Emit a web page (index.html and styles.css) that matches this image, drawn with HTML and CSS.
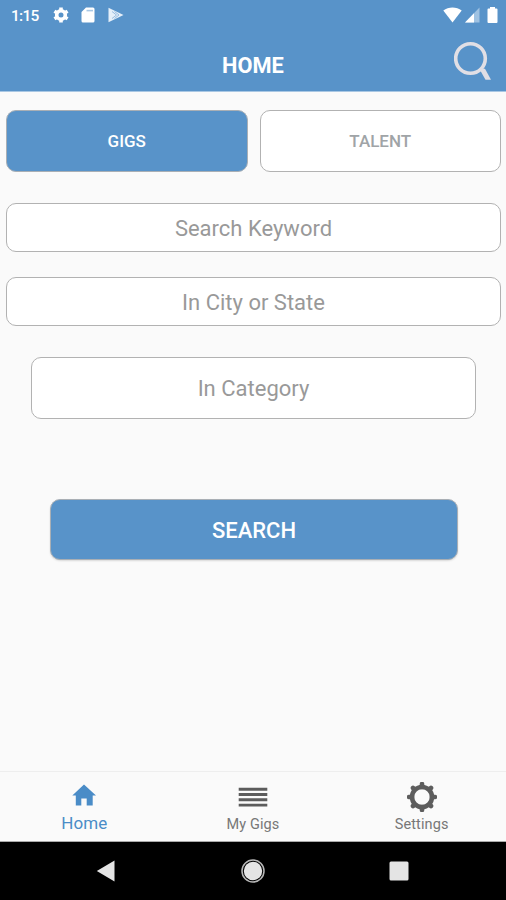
FILE: index.html
```html
<!DOCTYPE html>
<html lang="en">
<head>
<meta charset="utf-8">
<meta name="viewport" content="width=device-width, initial-scale=1">
<title>Home</title>
<link rel="stylesheet" href="styles.css">
</head>
<body>
<div class="screen">
  <header class="header">
    <div class="status">
      <span class="time">1:15</span>
      <svg class="st-gear" width="16" height="16" viewBox="0 0 16 16"><circle cx="8" cy="8" r="4.3" fill="none" stroke="#fff" stroke-width="3.6"/><path d="M8 .4V3M8 13v2.6M1.4 4.2l2.3 1.3M12.3 10.5l2.3 1.3M1.4 11.8l2.3-1.3M12.3 5.5l2.3-1.3" stroke="#fff" stroke-width="3.6"/></svg>
      <svg class="st-card" width="14" height="16" viewBox="0 0 14 16"><path d="M5 .5h7a1.5 1.5 0 0 1 1.5 1.5v12a1.5 1.5 0 0 1-1.500 1.500H2A1.500 1.500 0 0 1 .5 14V5z" fill="#fff"/><path d="M5.500 3.600h6.500" stroke="#a9c8e5" stroke-width="1.600"/></svg>
      <svg class="st-play" width="16" height="16" viewBox="0 0 16 16"><path d="M.5.8 15.500 8 .5 15.200z" fill="#e5eff9"/><path d="m4 4.500 4.500 3.500L4 11.500M6.500 4.500l4.500 3.500-4.500 3.500" fill="none" stroke="#8fb6dc" stroke-width=".9"/></svg>
      <span class="grow"></span>
      <svg width="19" height="16" viewBox="0 0 19 16"><path d="M.3 3.600C5.500-.4 13.500-.4 18.700 3.600L9.500 15.500z" fill="#fff"/></svg>
      <svg class="st-signal" width="15" height="16" viewBox="0 0 15 16"><path d="M14.500.5v15H0z" fill="#9fc2e2"/><path d="M9 6.200v9.300H0z" fill="#fff"/></svg>
      <svg class="st-battery" width="11" height="16" viewBox="0 0 11 16"><path d="M3 0h5v1.500h1.500a1 1 0 0 1 1 1V15a1 1 0 0 1-1 1h-8a1 1 0 0 1-1-1V2.500a1 1 0 0 1 1-1H3z" fill="#fff"/></svg>
    </div>
    <div class="titlebar">
      <span></span>
      <h1>HOME</h1>
      <svg class="search-icon" width="38" height="40" viewBox="0 0 38 40"><circle cx="16.500" cy="18.500" r="14.800" fill="none" stroke="#e1dfe5" stroke-width="3.600"/><path d="M25.300 28.800H31L37 39.800h-5.500z" fill="#e1dfe5"/></svg>
    </div>
  </header>
  <main class="content">
    <div class="toggle">
      <button class="btn primary small">GIGS</button>
      <button class="btn outline small">TALENT</button>
    </div>
    <div class="field keyword"><span>Search Keyword</span></div>
    <div class="field city"><span>In City or State</span></div>
    <div class="field category"><span>In Category</span></div>
    <button class="btn primary submit">SEARCH</button>
  </main>
  <nav class="tabs">
    <a class="tab active">
      <svg width="26" height="30" viewBox="0 0 26 30"><path d="M13 2.500 25 13.500H21.700V23.500H15.700V16.500h-5.400v7H4.800V13.500H1.300z" fill="#4a8cc7"/></svg>
      <span>Home</span>
    </a>
    <a class="tab">
      <svg width="30" height="30" viewBox="0 0 30 30"><path d="M.7 7.200h28.600M.7 12.500h28.600M.7 17.800h28.600M.7 23.100h28.600" stroke="#5c5c5c" stroke-width="2.900"/></svg>
      <span>My Gigs</span>
    </a>
    <a class="tab">
      <svg width="30" height="30" viewBox="0 0 30 30"><circle cx="15" cy="15" r="10" fill="none" stroke="#5d5d5d" stroke-width="4.600"/><path d="M15 2v3M15 25v3M2 15h3M25 15h3M6 6l1.500 1.500M22.500 22.500 24 24M6 24l1.500-1.500M22.500 7.500 24 6" stroke="#5d5d5d" stroke-width="4.600" stroke-linecap="round"/></svg>
      <span>Settings</span>
    </a>
  </nav>
  <footer class="navbar">
    <svg width="20" height="24" viewBox="0 0 20 24"><path d="M18.500 1.500v21L.8 12z" fill="#e4e4e4"/></svg>
    <svg width="24" height="24" viewBox="0 0 24 24"><circle cx="12" cy="12" r="11" fill="none" stroke="#b8b8b8" stroke-width="1.500"/><circle cx="12" cy="12" r="9.200" fill="#e4e4e4"/></svg>
    <svg width="20" height="20" viewBox="0 0 20 20"><rect x=".5" y=".5" width="19" height="19" rx="1.500" fill="#e4e4e4"/></svg>
  </footer>
</div>
</body>
</html>
```
FILE: styles.css
```css
* { box-sizing: border-box; }
body { margin: 0; background: #fafafa; font-family: Roboto, "Liberation Sans", sans-serif; }
svg { display: block; flex: none; }
.screen { width: 506px; height: 900px; display: flex; flex-direction: column; overflow: hidden; }

.header { height: 92px; background: #5893c9; border-bottom: 1px solid #a9c7e3; flex: none; }
.status { height: 40px; display: flex; align-items: flex-start; padding: 7px 8px 0 11px; }
.time { width: 42px; font-size: 15.500px; line-height: 18px; font-weight: 500; letter-spacing: -0.7px; color: #fff; }
.st-card { margin-left: 12px; }
.st-play { margin-left: 13px; }
.grow { flex: 1; }
.st-signal { margin-left: 3px; }
.st-battery { margin-left: 7px; }
.titlebar { display: grid; grid-template-columns: 1fr auto 1fr; padding: 0 14px; }
.titlebar h1 { margin: 12px 0 0; font-size: 21.800px; line-height: 28px; font-weight: 700; color: #fff; }
.search-icon { justify-self: end; }

.content { flex: 1; display: flex; flex-direction: column; padding: 18px 5px 0 6px; }
.toggle { display: grid; grid-template-columns: 1fr 1fr; gap: 12px; height: 62px; }
.btn { font-family: inherit; font-weight: 500; border-radius: 10px; padding: 0; text-align: center; }
.primary { background: #5893c9; color: #fff; border: 1px solid #a9afb5; }
.outline { background: #fff; color: #a0a4a7; border: 1px solid #b2b2b2; }
.small { font-size: 17px; }
.field { display: flex; align-items: center; justify-content: center; height: 49px; background: #fff; border: 1px solid #b2b2b2; border-radius: 10px; padding-top: 1px; font-size: 22px; color: #999; }
.keyword { margin-top: 31px; }
.city { margin-top: 25px; }
.category { height: 62px; margin: 31px 25px 0; }
.submit { height: 61px; margin: 80px 43px 0 44px; padding-top: 1px; font-size: 22px; box-shadow: 0 1px 2px #0002; }

.tabs { height: 71px; flex: none; display: grid; grid-template-columns: repeat(3, 1fr); border-top: 1px solid #eee; border-bottom: 1px solid #aaa; }
.tab { display: flex; flex-direction: column; align-items: center; padding-top: 10px; font-size: 14.500px; line-height: 20px; letter-spacing: 0.1px; color: #777; }
.tab span { margin-top: 3px; }
.active { font-size: 17px; color: #4a8cc7; }
.active span { margin-top: 1px; }

.navbar { height: 58px; flex: none; background: #000; display: flex; align-items: center; justify-content: space-between; padding: 0 97px 0 96px; }
```
